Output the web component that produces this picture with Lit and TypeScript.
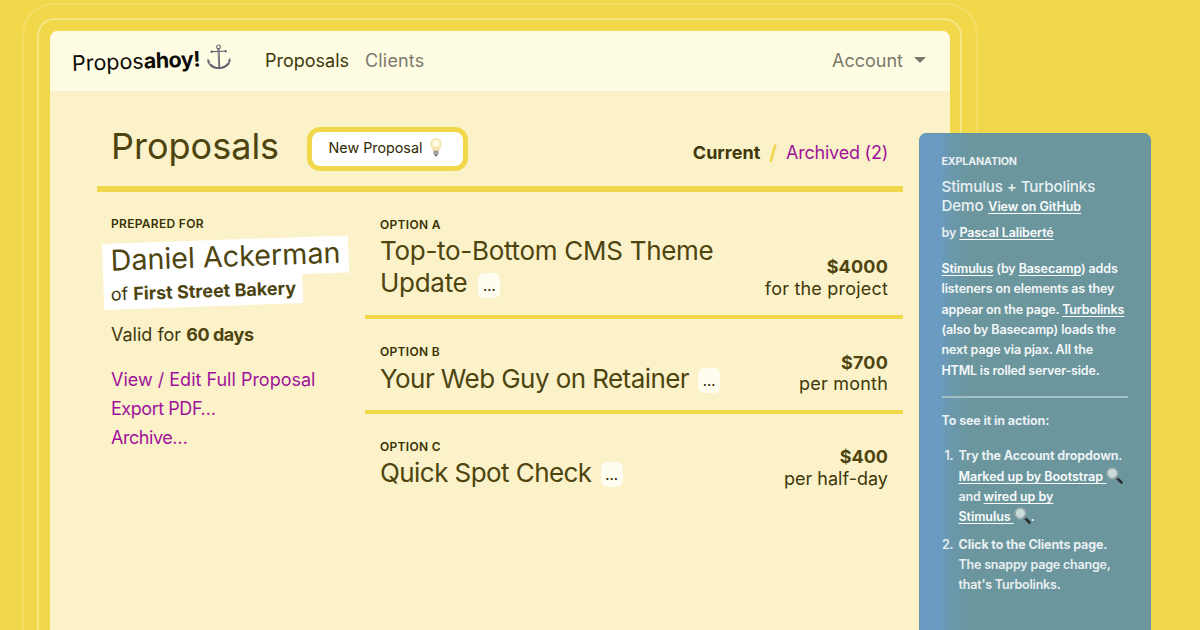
import { LitElement, html, css } from "lit";

const anchor = html`<svg class="anchor" viewBox="0 0 24 26" aria-hidden="true">
  <g fill="none" stroke="#62646f" stroke-linecap="round">
    <circle cx="12" cy="3" r="1.9" stroke-width="1.1" />
    <path d="M12 5v19" stroke-width="2" />
    <path d="M5 7.6h14" stroke-width="1.2" />
    <path d="M1.3 16.5C1.8 21.6 6.2 24.2 12 24.4c5.800-.2 10.200-2.800 10.700-7.900" stroke-width="1.600" />
    <path d="M3.600 20.400c2 2.500 5 3.600 8.400 3.800 3.400-.2 6.400-1.300 8.400-3.800" stroke-width="1.800" />
  </g>
  <path d="M.2 18.400L.8 14l2.700 3.600zM23.800 18.400l-.6-4.400-2.700 3.600z" fill="#777985" />
  <circle cx="5" cy="7.600" r="1.200" fill="#62646f" />
  <circle cx="19" cy="7.600" r="1.200" fill="#62646f" />
  <path d="M11.700 6v17" stroke="#a5a7b2" stroke-width=".6" />
</svg>`;

const bulb = html`<svg class="bulb" viewBox="0 0 12 19" aria-hidden="true">
  <path d="M6 .6a5.200 5.200 0 0 0-5.300 5.300c0 2.900 2.300 4 2.700 7h5.200c.4-3 2.700-4.100 2.700-7A5.200 5.200 0 0 0 6 .6z" fill="#fbeec0" stroke="#eedb9c" stroke-width=".9" />
  <ellipse cx="6" cy="5.200" rx="3" ry="3.200" fill="#fffbea" />
  <path d="M4.800 12.500L4.500 9l1.500.8L7.500 9l-.3 3.500" fill="none" stroke="#ecd798" stroke-width=".5" />
  <rect x="3.500" y="12.700" width="5" height="4" rx=".8" fill="#8b8c8e" />
  <path d="M3.500 14h5M3.500 15.400h5" stroke="#c9cacb" stroke-width=".5" />
  <path d="M4.500 16.700h3l-.8 1.600H5.300z" fill="#55565a" />
</svg>`;

const magnifier = () => html`<svg class="glass" viewBox="0 0 17 17" aria-hidden="true">
  <path d="M10.300 10.300l5.200 5.200" stroke="#2b2d2f" stroke-width="2.600" stroke-linecap="round" />
  <path d="M10 10l1.800 1.800" stroke="#8e9294" stroke-width="1.600" />
  <circle cx="6.300" cy="6.300" r="5.200" fill="#c9dcdc" stroke="#7f8889" stroke-width="1.200" />
  <circle cx="6.300" cy="6.300" r="5.500" fill="none" stroke="#dfe6e6" stroke-width=".5" />
</svg>`;

interface Option {
  key: string;
  label: string;
  lines: string[];
  price: string;
  unit: string;
}

const OPTIONS: Option[] = [
  { key: "a", label: "Option A", lines: ["Top-to-Bottom CMS Theme", "Update"], price: "$4000", unit: "for the project" },
  { key: "b", label: "Option B", lines: ["Your Web Guy on Retainer"], price: "$700", unit: "per month" },
  { key: "c", label: "Option C", lines: ["Quick Spot Check"], price: "$400", unit: "per half-day" },
];

class AppRoot extends LitElement {
  static styles = css`
    :host {
      display: block;
      position: relative;
      height: 630px;
      overflow: hidden;
      background: #f1d74a;
      color: #40380a;
      font: 400 18px/1 Inter, "Liberation Sans", sans-serif;
      white-space: nowrap;
    }
    * { box-sizing: border-box; }
    b { font-weight: 700; }
    .outer {
      width: 956px;
      height: 700px;
      margin: 3px 0 0 22px;
      padding: 13px 14px 0 13px;
      border: 2px solid #f3dd63;
      border-radius: 32px;
    }
    .inner {
      height: 100%;
      padding: 11px 10px 0 11px;
      border: 2px solid #f6e685;
      border-radius: 18px;
    }
    .card {
      height: 100%;
      border-radius: 8px;
      overflow: hidden;
      background: #fbf2c9;
    }
    header {
      display: flex;
      align-items: center;
      height: 60px;
      padding: 0 24px 0 22px;
      background: #fffce4;
    }
    .brand {
      display: flex;
      align-items: center;
      width: 193px;
      margin-top: 5px;
      color: #0c0b05;
      font-size: 21.500px;
      transform: rotate(-2deg);
      transform-origin: 0 50%;
    }
    .brand b { letter-spacing: -0.500px; }
    .anchor { width: 24px; height: 26px; margin: -4px 0 0 7px; }
    nav { display: flex; flex: 1; gap: 16px; }
    .muted { color: #7b796b; letter-spacing: 0.150px; }
    .account { display: flex; align-items: center; gap: 11px; color: #7b796b; }
    .caret {
      border: 6px solid transparent;
      border-top-color: #7b796b;
      border-bottom: 0;
      margin-top: -3px;
    }
    main { padding: 0 47px; }
    .titlebar {
      display: flex;
      align-items: center;
      height: 101px;
      padding: 20px 15px 0 13px;
      border-bottom: 6px solid #f1d74a;
    }
    h1 {
      margin: 0 25px 5px 0;
      width: 172px;
      padding-left: 1px;
      font: inherit;
      font-size: 36px;
      color: #4d440f;
    }
    .new {
      display: flex;
      align-items: center;
      justify-content: center;
      gap: 8px;
      width: 161px;
      height: 44px;
      padding-right: 4px;
      border: 5px solid #f1d74a;
      border-radius: 13px;
      background: #fff;
      font-size: 14.300px;
      color: #2f2903;
    }
    .bulb { width: 12px; height: 19px; margin-top: -3px; }
    .tabs { display: flex; gap: 9px; margin: 9px 0 0 auto; }
    .slash { color: #f1d74a; font-weight: 700; font-size: 20px; margin-top: -1px; }
    .archived { letter-spacing: -0.220px; }
    .link { color: #a0129a; }
    .tight { letter-spacing: -0.450px; }
    .cols { display: grid; grid-template-columns: 268px 1fr; }
    .label {
      font-size: 12px;
      line-height: 16px;
      font-weight: 600;
      letter-spacing: 0.300px;
      text-transform: uppercase;
      color: #3a3206;
    }
    .client { padding: 24px 0 0 14px; }
    .tag {
      display: flex;
      flex-direction: column;
      align-items: flex-start;
      margin: 11.500px 0 0 -9px;
      transform: rotate(-2deg);
      transform-origin: 0 0;
    }
    .name {
      width: 246px;
      height: 37px;
      padding-left: 8px;
      background: #fff;
      font-size: 28.700px;
      line-height: 33px;
      color: #4d440f;
    }
    .company {
      width: 199px;
      height: 29px;
      padding-left: 7px;
      background: #fff;
      line-height: 28px;
    }
    .company b, .valid b { color: #4d440f; }
    .valid { margin-top: 13px; line-height: 24px; }
    .valid b { letter-spacing: -0.450px; }
    .links { margin-top: 18px; line-height: 29px; }
    .option {
      display: flex;
      justify-content: space-between;
      align-items: flex-end;
      padding: 24.500px 15px 16.500px 15px;
      border-bottom: 4px solid #f1d74a;
    }
    .option.c { padding-top: 25px; border: 0; }
    .option h2 {
      margin: 2px 0 0;
      font: inherit;
      font-size: 26px;
      line-height: 32px;
      letter-spacing: -0.290px;
      color: #4d440f;
    }
    .option.b h2 { margin: 3px 0 -1px; }
    .b h2, .c h2 { letter-spacing: -0.570px; }
    .row { display: flex; height: 32px; }
    .more {
      width: 22px;
      height: 25px;
      margin: 6px 0 0 11px;
      border-radius: 6px;
      background: #fffdf0;
      color: #2f2903;
      font-size: 14px;
      font-weight: 500;
      line-height: 26px;
      letter-spacing: 0;
      text-align: center;
    }
    .b .more, .c .more { margin-left: 9px; margin-top: 5px; }
    .price { margin-bottom: -1px; text-align: right; line-height: 21.500px; letter-spacing: 0.200px; }
    .a .price { margin-bottom: -0.500px; }
    .c .price { letter-spacing: 0.020px; margin-bottom: 0; }
    .price b { color: #4d440f; }
    aside {
      position: absolute;
      left: 919px;
      top: 133px;
      width: 232px;
      height: 520px;
      padding: 19.500px 22px 0 21.500px;
      border: 1px solid #6494a6;
      border-radius: 7px;
      background: linear-gradient(90deg, #6b9bc4 0, #6b9bc2 18px, #6a98ac 32px, #6b969e 48px);
      color: #e9f0f2;
      font-size: 12.500px;
      font-weight: 600;
      line-height: 20.350px;
      letter-spacing: -0.080px;
    }
    aside u {
      color: #fafcfc;
      text-underline-offset: 2px;
      text-decoration-thickness: 1px;
      text-decoration-skip-ink: none;
    }
    .kicker { font-size: 10.700px; font-weight: 700; line-height: 16px; letter-spacing: -0.150px; }
    .demo { margin-top: 7px; font-size: 15.200px; font-weight: 500; line-height: 19.500px; letter-spacing: -0.150px; }
    .demo u { margin-left: 1px; font-size: 12.500px; font-weight: 600; letter-spacing: -0.050px; }
    .by { margin-top: 6px; letter-spacing: -0.060px; }
    .by u { letter-spacing: -0.100px; }
    .about { margin-top: 16px; letter-spacing: -0.110px; color: #f4f8f8; }
    .wide { letter-spacing: -0.160px; }
    .caps { letter-spacing: -0.200px; }
    hr { margin: 15.500px 0 12.500px; border: 0; height: 2px; background: #a3bfc6; }
    .strong { font-weight: 700; letter-spacing: -0.120px; }
    ol { display: grid; gap: 7px; margin: 15px 0 0; padding: 0; list-style: none; }
    li { display: grid; grid-template-columns: 17px 1fr; }
    .num { padding-right: 5px; text-align: right; margin-left: -2px; }
    .step { letter-spacing: -0.190px; }
    .step u { letter-spacing: -0.050px; }
    .step .marked { letter-spacing: 0; }
    .glass { width: 17px; height: 17px; margin: -4px 0 -2px; vertical-align: -1px; }
  `;

  render() {
    return html`
      <div class="outer"><div class="inner"><div class="card">
        <header>
          <div class="brand"><span>Propos<b>ahoy!</b></span>${anchor}</div>
          <nav><span>Proposals</span><span class="muted">Clients</span></nav>
          <div class="account">Account<span class="caret"></span></div>
        </header>
        <main>
          <div class="titlebar">
            <h1>Proposals</h1>
            <div class="new">New Proposal ${bulb}</div>
            <div class="tabs"><b>Current</b><span class="slash">/</span><span class="link archived">Archived (2)</span></div>
          </div>
          <div class="cols">
            <section class="client">
              <div class="label">Prepared for</div>
              <div class="tag">
                <div class="name">Daniel Ackerman</div>
                <div class="company">of <b>First Street Bakery</b></div>
              </div>
              <div class="valid">Valid for <b>60 days</b></div>
              <div class="links">
                <div class="link">View / Edit Full Proposal</div>
                <div class="link tight">Export PDF…</div>
                <div class="link tight">Archive…</div>
              </div>
            </section>
            <section>
              ${OPTIONS.map(
                (o) => html`<div class="option ${o.key}">
                  <div>
                    <div class="label">${o.label}</div>
                    <h2>${o.lines.map(
                      (l, i) => html`<div class="row">${l}${i === o.lines.length - 1 ? html`<span class="more">…</span>` : ""}</div>`
                    )}</h2>
                  </div>
                  <div class="price"><b>${o.price}</b><br />${o.unit}</div>
                </div>`
              )}
            </section>
          </div>
        </main>
      </div></div></div>
      <aside>
        <div class="kicker">EXPLANATION</div>
        <div class="demo">Stimulus + Turbolinks<br />Demo <u>View on GitHub</u></div>
        <div class="by">by <u>Pascal Laliberté</u></div>
        <div class="about">
          <u>Stimulus</u> (by <u>Basecamp</u>) adds<br />
          listeners on elements as they<br />
          <span class="wide">appear on the page. <u>Turbolinks</u></span><br />
          (also by Basecamp) loads the<br />
          next page via pjax. All the<br />
          <span class="caps">HTML is rolled server-side.</span>
        </div>
        <hr />
        <div class="strong">To see it in action:</div>
        <ol>
          <li>
            <span class="num">1.</span>
            <div class="step">
              <span class="strong">Try the Account dropdown</span>.<br />
              <u class="marked">Marked up by Bootstrap ${magnifier()}</u><br />
              and <u>wired up by</u><br />
              <u>Stimulus ${magnifier()}</u>.
            </div>
          </li>
          <li>
            <span class="num">2.</span>
            <div class="step">
              <span class="strong">Click to the Clients page.</span><br />
              The snappy page change,<br />
              that's Turbolinks.
            </div>
          </li>
        </ol>
      </aside>
    `;
  }
}
customElements.define("app-root", AppRoot);
